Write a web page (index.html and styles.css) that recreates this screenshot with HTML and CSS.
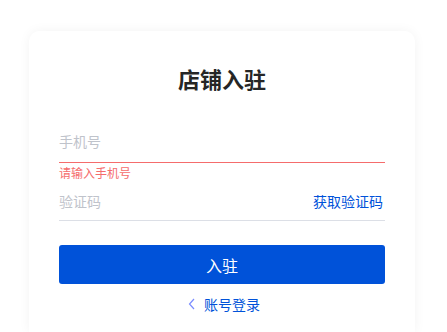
FILE: index.html
```html
<!DOCTYPE html>
<html lang="zh">
<head>
<meta charset="utf-8">
<link rel="stylesheet" href="styles.css">
</head>
<body>
<div class="page">
  <div class="card">
    <h1 class="title">店铺入驻</h1>
    <form class="form">
      <div class="field field-error">
        <input class="input" type="text" placeholder="手机号">
      </div>
      <div class="error">请输入手机号</div>
      <div class="field">
        <input class="input" type="text" placeholder="验证码">
        <a class="code-link" href="#">获取验证码</a>
      </div>
      <button class="submit" type="button">入驻</button>
      <a class="back" href="#">
        <svg class="chev" width="8" height="12" viewBox="0 0 8 12"><path d="M6 1 L1.5 6 L6 11" fill="none" stroke="currentColor" stroke-width="1.2"/></svg>
        <span>账号登录</span>
      </a>
    </form>
  </div>
</div>
</body>
</html>
```
FILE: styles.css
```css
* { box-sizing: border-box; }
html, body { margin: 0; padding: 0; background: #fff; }
body { font-family: "Noto Sans CJK SC", "Noto Sans", sans-serif; }
.page { padding: 31px 32px 0 29px; }
.card {
  width: 386px;
  height: 301px;
  background: #fff;
  border-radius: 10px 10px 0 0;
  box-shadow: 0 0 12px rgba(0,0,0,0.05);
  padding: 32px 30px 0;
}
.title {
  margin: 0;
  text-align: center;
  font-size: 22px;
  font-weight: 700;
  color: #262626;
  line-height: 30px;
}
.form { display: flex; flex-direction: column; margin-top: 24px; }
.field {
  display: flex;
  align-items: center;
  height: 46px;
  border-bottom: 1px solid #dcdfe6;
}
.field-error { border-bottom-color: #f56c6c; }
.input {
  flex: 1;
  border: none;
  outline: none;
  padding: 0;
  font: inherit;
  font-size: 14px;
  color: #333;
  background: transparent;
  margin-top: 2px;
}
.input::placeholder { color: #bfc3cb; }
.error {
  font-size: 12px;
  line-height: 16px;
  color: #f56c6c;
  margin-top: 2px;
}
.field + .error + .field { height: 40px; }
.field + .error + .field .input { margin-top: 0; }
.code-link {
  font-size: 14px;
  color: #0052d9;
  text-decoration: none;
  margin-right: 2px;
}
.submit {
  margin-top: 24px;
  height: 39px;
  border: none;
  border-radius: 3px;
  background: #0052d9;
  color: #fff;
  font: inherit;
  font-size: 16px;
}
.back {
  align-self: center;
  display: flex;
  align-items: center;
  gap: 8px;
  margin-top: 9px;
  font-size: 14px;
  line-height: 22px;
  color: #0052d9;
  text-decoration: none;
  margin-left: 4px;
}
.chev { color: #7a8cff; }
```
